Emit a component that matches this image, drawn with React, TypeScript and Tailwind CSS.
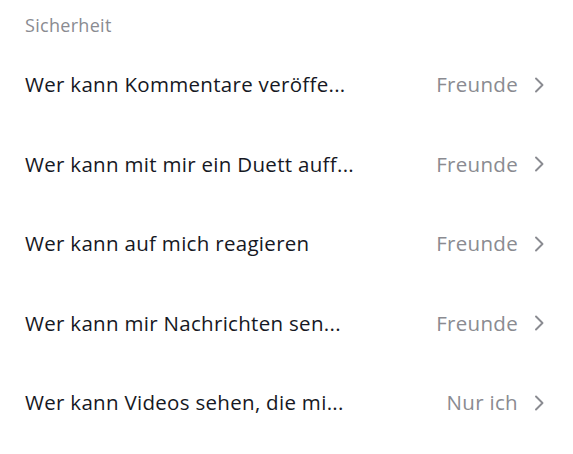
const rows = [
  { label: "Wer kann Kommentare veröffe...", value: "Freunde" },
  { label: "Wer kann mit mir ein Duett auff...", value: "Freunde" },
  { label: "Wer kann auf mich reagieren", value: "Freunde" },
  { label: "Wer kann mir Nachrichten sen...", value: "Freunde" },
  { label: "Wer kann Videos sehen, die mi...", value: "Nur ich" },
];

function Chevron() {
  return (
    <svg width="10" height="16" viewBox="0 0 10 16" fill="none" className="text-[#8a8b91]">
      <polyline
        points="2,1.5 8.5,8 2,14.5"
        stroke="currentColor"
        strokeWidth="1.9"
        strokeLinecap="round"
        strokeLinejoin="round"
      />
    </svg>
  );
}

export default function App() {
  return (
    <div
      className="h-[454px] w-[573px] overflow-hidden bg-white"
      style={{ fontFamily: "'Open Sans', sans-serif" }}
    >
      <div className="px-[25px] pt-[13px] pb-[8px] text-[18px] leading-[24px] tracking-[0.3px] text-[#8a8b91]">
        Sicherheit
      </div>
      <ul>
        {rows.map((r) => (
          <li
            key={r.label}
            className="flex h-[79.5px] items-center justify-between pl-[25px] pr-[29px]"
          >
            <span className="text-[20.5px] tracking-[0.3px] text-[#161823]">{r.label}</span>
            <span className="flex items-center gap-[16px] text-[20.5px] tracking-[0.3px] text-[#8a8b91]">
              {r.value}
              <Chevron />
            </span>
          </li>
        ))}
      </ul>
    </div>
  );
}
